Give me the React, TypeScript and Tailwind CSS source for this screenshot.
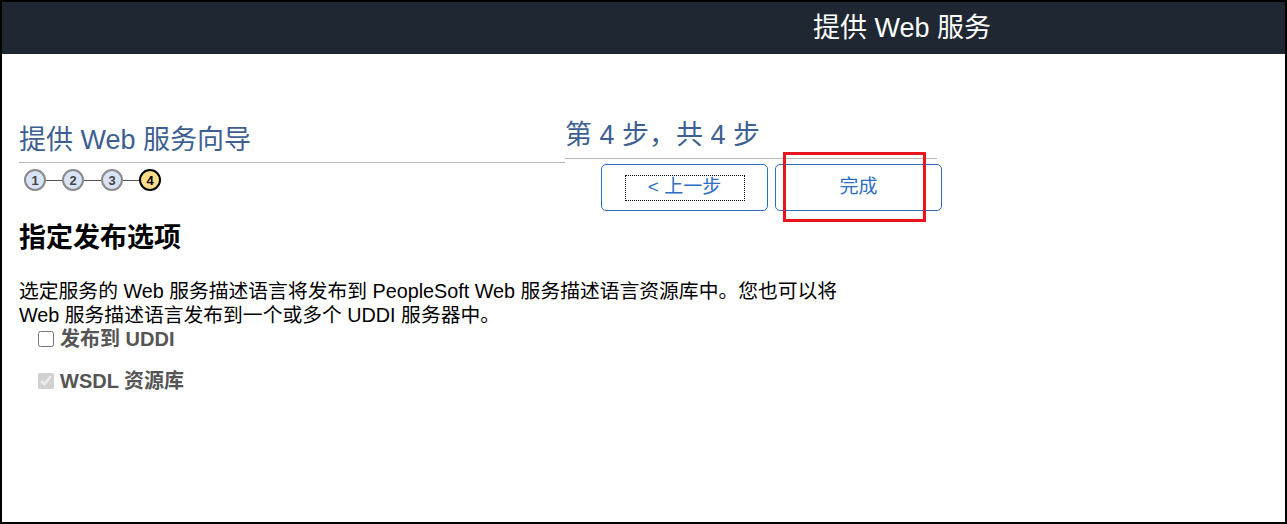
import React from "react";

const font = {
  fontFamily: '"Liberation Sans", Arial, "Noto Sans CJK SC", sans-serif',
};

function StepDot({ n, current }: { n: number; current?: boolean }) {
  return (
    <div
      className={`flex h-[22px] w-[22px] shrink-0 items-center justify-center rounded-full border-2 text-[13px] font-bold leading-none ${
        current
          ? "border-black bg-[#fddc8c] text-black"
          : "border-[#8a8a8a] bg-[#d9e3f7] text-[#444]"
      }`}
    >
      {n}
    </div>
  );
}

export default function App() {
  return (
    <div
      className="h-[524px] w-[1287px] border-2 border-black bg-white"
      style={font}
    >
      <div className="flex h-[52px] items-center bg-[#1f2733] pl-[811px]">
        <span className="text-[27px] text-white">提供 Web 服务</span>
      </div>

      <div className="flex pl-[17px] pt-[70px]">
        <div className="w-[546px] shrink-0">
          <div className="border-b border-[#b8b8b8] pb-[6px] text-[27px] leading-[32px] text-[#3d5f91]">
            提供 Web 服务向导
          </div>
          <div className="mt-[6px] flex items-center pl-[5px]">
            <StepDot n={1} />
            <div className="h-px w-[16px] bg-[#555]" />
            <StepDot n={2} />
            <div className="h-px w-[17px] bg-[#555]" />
            <StepDot n={3} />
            <div className="h-px w-[16px] bg-[#555]" />
            <StepDot n={4} current />
          </div>
        </div>

        <div className="-mt-[5px] w-[372px] shrink-0">
          <div className="border-b border-[#b8b8b8] pb-[7px] text-[27px] leading-[32px] text-[#3d5f91]">
            第 4 步，共 4 步
          </div>
          <div className="mt-[5px] flex gap-[7px] pl-[36px]">
            <button className="flex h-[47px] w-[167px] shrink-0 items-center justify-center rounded-[5px] border border-[#2c6ec4] bg-white text-[19px] text-[#2c6ec4]">
              <span className="flex h-[26px] w-[120px] items-center justify-center border border-dotted border-black">
                &lt; 上一步
              </span>
            </button>
            <div className="relative shrink-0">
              <button className="flex h-[47px] w-[167px] items-center justify-center rounded-[5px] border border-[#2c6ec4] bg-white text-[19px] text-[#2c6ec4]">
                完成
              </button>
              <div className="absolute left-[8px] top-[-12px] h-[70px] w-[143px] border-[3px] border-[#e8141e]" />
            </div>
          </div>
        </div>
      </div>

      <div className="pl-[17px]">
        <h2 className="mt-[11px] text-[27px] font-bold leading-[32px] text-black">
          指定发布选项
        </h2>
        <p className="mt-[25px] text-[19.8px] leading-[24px] text-black">
          选定服务的 Web 服务描述语言将发布到 PeopleSoft Web 服务描述语言资源库中。您也可以将
          <br />
          Web 服务描述语言发布到一个或多个 UDDI 服务器中。
        </p>
        <label className="flex h-[24px] items-center pl-[19px] text-[20px] font-bold text-[#555]">
          <input type="checkbox" className="mr-[6px] h-[16px] w-[16px]" />
          发布到 UDDI
        </label>
        <label className="mt-[18px] flex h-[24px] items-center pl-[19px] text-[20px] font-bold text-[#555]">
          <input
            type="checkbox"
            checked
            disabled
            readOnly
            className="mr-[6px] h-[16px] w-[16px]"
          />
          WSDL 资源库
        </label>
      </div>
    </div>
  );
}
